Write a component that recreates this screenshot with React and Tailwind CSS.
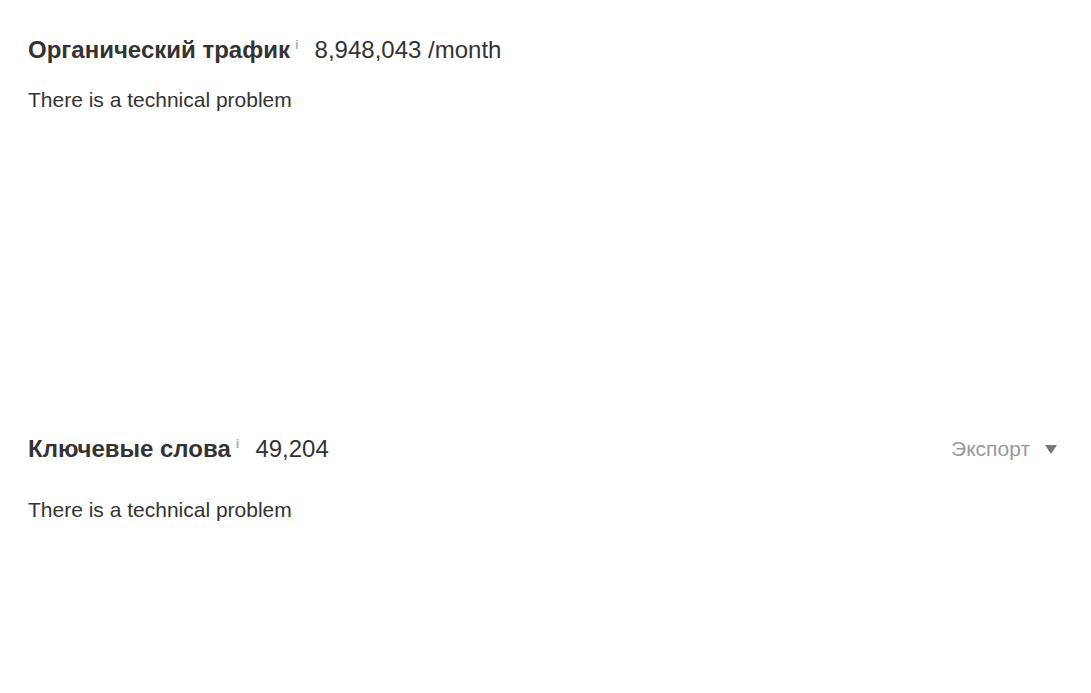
const font = { fontFamily: '"Liberation Sans", Arial, sans-serif' };

function InfoMark() {
  return <span className="ml-[5px] self-start mt-[3px] text-[13px] leading-none text-[#b0b0b0]">i</span>;
}

function Caret() {
  return (
    <svg width="12" height="9" viewBox="0 0 12 9" className="ml-[15px]">
      <path d="M0 0 L12 0 L6 9 Z" fill="#777" />
    </svg>
  );
}

function Section({ title, value, extra, export: showExport, className = '', gap = 'mt-[23px]' }) {
  return (
    <section className={className}>
      <div className="flex items-center h-[30px]">
        <h2 className="flex text-[24px] font-bold text-[#333] leading-[30px]">
          {title}
          <InfoMark />
        </h2>
        <span className="ml-[16px] text-[24px] text-[#333] leading-[30px]">
          {value}
          {extra && <span> {extra}</span>}
        </span>
        {showExport && (
          <button className="ml-auto flex items-center text-[21px] text-[#999]">
            Экспорт
            <Caret />
          </button>
        )}
      </div>
      <p className={`text-[21px] text-[#333] leading-[24px] ${gap}`}>There is a technical problem</p>
    </section>
  );
}

export default function App() {
  return (
    <div className="w-[1091px] h-[693px] bg-white pl-[28px] pr-[34px] pt-[35px]" style={font}>
      <Section title="Органический трафик" value="8,948,043" extra="/month" />
      <Section title="Ключевые слова" value="49,204" export className="mt-[322px]" gap="mt-[34px]" />
    </div>
  );
}
